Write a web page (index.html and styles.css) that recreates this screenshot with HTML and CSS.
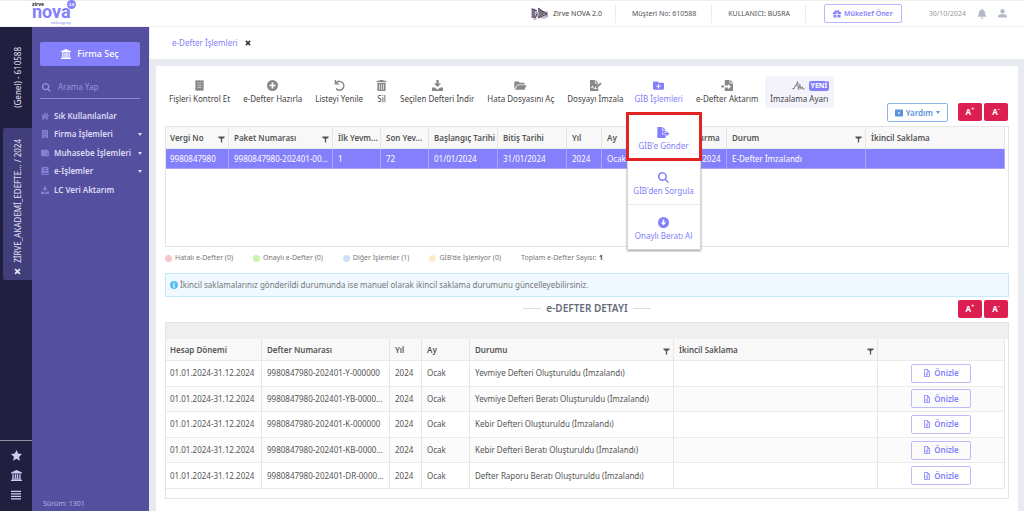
FILE: index.html
```html
<!DOCTYPE html>
<html lang="tr">
<head>
<meta charset="utf-8">
<title>Zirve NOVA 2.0 - e-Defter İşlemleri</title>
<link rel="stylesheet" href="styles.css">
</head>
<body>
<svg class="defs" aria-hidden="true">
  <symbol id="bank" viewBox="0 0 16 16"><path d="M8 0l8 3.500V5H0V3.500zM2 6h2v6H2zM5.500 6h2v6h-2zM8.500 6h2v6h-2zM12 6h2v6h-2zM1 12.500h14V14H1zM0 14.500h16V16H0z"/></symbol>
  <symbol id="search" viewBox="0 0 16 16"><path d="M6.500 0a6.500 6.500 0 0 1 5.200 10.300l4.100 4.100-1.600 1.600-4.100-4.200A6.500 6.500 0 1 1 6.500 0zm0 2.300a4.200 4.200 0 1 0 0 8.400 4.200 4.200 0 0 0 0-8.400z"/></symbol>
  <symbol id="home" viewBox="0 0 16 16"><path d="M8 1l8 7-1 1.200L8 3.200 1 9.200 0 8zM8 4.500l5.500 4.700V15h-4v-4h-3v4h-4V9.200zM12 2h2v4l-2-1.800z"/></symbol>
  <symbol id="building" viewBox="0 0 16 16"><path fill-rule="evenodd" d="M2 0h12v16h-4.500v-3h-3v3H2zM5 2.500V5h2V2.500zm4 0V5h2V2.500zM5 7v2.500h2V7zm4 0v2.500h2V7z"/></symbol>
  <symbol id="wallet" viewBox="0 0 16 16"><path fill-rule="evenodd" d="M2 1.500h12v2h1a1 1 0 0 1 1 1v9a1 1 0 0 1-1 1H2a2 2 0 0 1-2-2v-9a2 2 0 0 1 2-2zm10.500 6.500v2h2V8z"/></symbol>
  <symbol id="book" viewBox="0 0 16 16"><path fill-rule="evenodd" d="M3 0h12v16H3a2 2 0 0 1-2-2V2a2 2 0 0 1 2-2zm2 3v1.500h7V3zm0 3v1.500h7V6zm-1.500 6v2H13v-2z"/></symbol>
  <symbol id="download" viewBox="0 0 16 16"><path d="M6.300 0h3.400v5h3.500L8 10.200 2.800 5h3.500zM0 11h4.500L8 14l3.500-3H16v5H0z"/></symbol>
  <symbol id="star" viewBox="0 0 16 16"><path d="M8 0l2.400 5.200 5.600.7-4.200 3.900 1.100 5.700L8 12.700l-4.900 2.800 1.100-5.700L0 5.900l5.600-.7z"/></symbol>
  <symbol id="bars" viewBox="0 0 16 16"><path d="M0 1h16v2H0zM0 5h16v2H0zM0 9h16v2H0zM0 13h16v2H0z"/></symbol>
  <symbol id="receipt" viewBox="0 0 16 16"><path fill-rule="evenodd" d="M2 0l1.500 1L5 0l1.500 1L8 0l1.500 1L11 0l1.500 1L14 0v16l-1.500-1-1.500 1-1.500-1L8 16l-1.500-1L5 16l-1.500-1L2 16zM5 4v.8h6V4zm0 3.500v.8h6v-.8zM5 11v.8h6V11z"/></symbol>
  <symbol id="plus" viewBox="0 0 16 16"><path fill-rule="evenodd" d="M8 0a8 8 0 1 1 0 16A8 8 0 0 1 8 0zM6.800 3.700v3.100H3.700v2.400h3.100v3.100h2.400V9.200h3.100V6.800H9.200V3.700z"/></symbol>
  <symbol id="undo" viewBox="0 0 16 16"><path d="M1 0v6.500h6.500V4.600H4.300A5.200 5.200 0 1 1 4 11.800l-1.700 1.600A7.500 7.500 0 1 0 3 2.700V0z"/></symbol>
  <symbol id="trash" viewBox="0 0 16 16"><path fill-rule="evenodd" d="M5.500 0h5l.7 1H15v2H1V1h3.800zM2 4h12v11a1 1 0 0 1-1 1H3a1 1 0 0 1-1-1zm2.500 2v8h1V6zm3 0v8h1V6zm3 0v8h1V6z"/></symbol>
  <symbol id="folder" viewBox="0 0 18 16"><path d="M0 3a1 1 0 0 1 1-1h5l2 2h6a1 1 0 0 1 1 1v1.500H4.500L0 13zM5 7.500h13L14.500 14H1z"/></symbol>
  <symbol id="sign" viewBox="0 0 18 16"><path fill-rule="evenodd" d="M1 0h7v5h5v2L8 11v2h3l2-2v5H1zM2.500 11l1 1 1-2 1 2.500H8v-1H6.500L5 8z"/><path d="M9 0l4 4H9zM16 3.500l2 2L11.500 12H9.500v-2z"/></symbol>
  <symbol id="folderplus" viewBox="0 0 16 16"><path fill-rule="evenodd" d="M1.500 2h5l2 2h6A1.500 1.500 0 0 1 16 5.500v7a1.500 1.500 0 0 1-1.500 1.500h-13A1.500 1.500 0 0 1 0 12.500v-9A1.500 1.500 0 0 1 1.500 2zm5.700 4v2.200H5v1.600h2.200V12h1.600V9.800H11V8.200H8.800V6z"/></symbol>
  <symbol id="import" viewBox="0 0 18 16"><path fill-rule="evenodd" d="M5 0h7v5h5v11H5v-5h5v2.500L14 9.500 10 6v2H5z"/><path d="M13 0l4 4h-4zM0 8h4v3H0z"/></symbol>
  <symbol id="export" viewBox="0 0 18 16"><path fill-rule="evenodd" d="M0 0h7v5h5v3H7v3h5v5H0z"/><path d="M8 0l4 4H8zM8 8.800h5V6l4.800 3.800L13 13.500v-3H8z"/></symbol>
  <symbol id="wave" viewBox="0 0 18 16"><path d="M0 13l3-1 1.500-4h1.500L7.500 2l1.500 12 2-7 1.500 5.500 2-2 1 2.500H18" fill="none" stroke="currentColor" stroke-width="1.600"/></symbol>
  <symbol id="arrowdown" viewBox="0 0 16 16"><path fill-rule="evenodd" d="M8 0a8 8 0 1 1 0 16A8 8 0 0 1 8 0zM6.800 3.500V8H4l4 4.500L12 8H9.200V3.500z"/></symbol>
  <symbol id="film" viewBox="0 0 16 14"><path fill-rule="evenodd" d="M1.500 0h13A1.500 1.500 0 0 1 16 1.500v11a1.500 1.500 0 0 1-1.500 1.500h-13A1.500 1.500 0 0 1 0 12.500v-11A1.500 1.500 0 0 1 1.500 0zM6.500 4.500v5l4-2.500z"/></symbol>
  <symbol id="filter" viewBox="0 0 16 16"><path d="M1 1h14v3L9.500 7v8h-3V7L1 4z"/></symbol>
  <symbol id="gift" viewBox="0 0 16 16"><path fill-rule="evenodd" d="M1 4h2.500A2.500 2.500 0 0 1 8 1.800 2.500 2.500 0 0 1 12.500 4H15a1 1 0 0 1 1 1v3H9V4H7v4H0V5a1 1 0 0 1 1-1zM1 9.300h6V15H1zM9 9.300h6V15H9z"/></symbol>
  <symbol id="bell" viewBox="0 0 16 16"><path d="M8 0c1 0 1.500.6 1.500 1.400C12 2 13 4 13 6.500c0 3 1 4.500 2.500 6h-15C2 11 3 9.500 3 6.500 3 4 4 2 6.500 1.400 6.500.6 7 0 8 0zM5.800 13.500h4.400a2.200 2.200 0 0 1-4.400 0z"/></symbol>
  <symbol id="user" viewBox="0 0 16 16"><path d="M8 0a4 4 0 1 1 0 8 4 4 0 0 1 0-8zM0 15v-2c0-2.500 5-4 8-4s8 1.500 8 4v2z"/></symbol>
  <symbol id="info" viewBox="0 0 16 16"><path fill-rule="evenodd" d="M8 0a8 8 0 1 1 0 16A8 8 0 0 1 8 0zM6.800 3v2.400h2.400V3zM6 6.500v1.800h1v3H6V13h4v-1.700H9V6.500z"/></symbol>
  <symbol id="doc" viewBox="0 0 12 16"><path d="M1 1h6l4 4v10H1zM7 1v4h4M3.500 8h5M3.500 10h5M3.500 12h5" fill="none" stroke="currentColor" stroke-width="1.600"/></symbol>
  <symbol id="close" viewBox="0 0 10 10"><path d="M1.500 1.500l7 7M8.500 1.500l-7 7" fill="none" stroke="currentColor" stroke-width="2.600"/></symbol>
</svg>

<header class="topbar">
  <a class="logo" href="#" aria-label="Zirve nova 2.0 mikrogrup">
    <span class="logo-zirve">zirve</span>
    <span class="logo-nova">nova</span>
    <span class="logo-badge">2.0</span>
    <span class="logo-group">mikrogrup</span>
  </a>
  <div class="top-item product">
    <svg class="horn" viewBox="0 0 18 14"><path d="M0 1l5 1 1 3 10-1 1 6-4 2-7-2-1 3H3l-1-2H0z" fill="#c9b8dc"/><path d="M1 2h3v9H1zM7 1l8 5-8 5z" fill="#77727c"/><path d="M5 5h3v4H5zM13 5h4v5h-2z" fill="#aaa2b5"/><path d="M1 2l5 2M7 1l9 6-9 4M4 11l2-4" fill="none" stroke="#45404f"/></svg>
    Zirve NOVA 2.0
  </div>
  <div class="top-item">Müşteri No: 610588</div>
  <div class="top-item">KULLANICI: BUSRA</div>
  <button class="refer" type="button"><svg class="i8"><use href="#gift"/></svg>Mükellef Öner</button>
  <span class="date">30/10/2024</span>
  <button class="top-icon" type="button" aria-label="Bildirimler"><svg class="i10"><use href="#bell"/></svg></button>
  <button class="top-icon" type="button" aria-label="Kullanıcı"><svg class="i9"><use href="#user"/></svg></button>
</header>

<div class="shell">
  <nav class="rail" aria-label="Firmalar">
    <button class="rail-tab" type="button"><span class="vertical">(Genel) - 610588</span></button>
    <button class="rail-tab active" type="button"><span class="vertical">ZİRVE_AKADEMİ_EDEFTE... / 2024</span><svg class="i7"><use href="#close"/></svg></button>
    <div class="rail-tools">
      <button type="button" aria-label="Favoriler"><svg class="i12"><use href="#star"/></svg></button>
      <button type="button" aria-label="Firma"><svg class="i11"><use href="#bank"/></svg></button>
      <button type="button" aria-label="Menü"><svg class="i10"><use href="#bars"/></svg></button>
    </div>
  </nav>

  <aside class="sidebar">
    <button class="pick" type="button"><svg class="i10"><use href="#bank"/></svg>Firma Seç</button>
    <label class="search"><svg class="i9"><use href="#search"/></svg><input type="text" placeholder="Arama Yap" aria-label="Arama Yap"></label>
    <ul class="menu">
      <li><a href="#"><svg class="i8"><use href="#home"/></svg>Sık Kullanılanlar</a></li>
      <li><a href="#"><svg class="i8"><use href="#building"/></svg>Firma İşlemleri<i class="caret"></i></a></li>
      <li><a href="#"><svg class="i8"><use href="#wallet"/></svg>Muhasebe İşlemleri<i class="caret"></i></a></li>
      <li><a href="#"><svg class="i8"><use href="#book"/></svg>e-İşlemler<i class="caret"></i></a></li>
      <li><a href="#"><svg class="i8"><use href="#download"/></svg>LC Veri Aktarım</a></li>
    </ul>
    <p class="version">Sürüm: 1301</p>
  </aside>

  <main class="main">
    <div class="tabs"><a href="#">e-Defter İşlemleri</a><button type="button" aria-label="Sekmeyi kapat"><svg class="i6"><use href="#close"/></svg></button></div>
    <section class="card">
      <div class="card-head">
        <div class="toolbar">
          <button class="tool" type="button"><svg class="i11"><use href="#receipt"/></svg>Fişleri Kontrol Et</button>
          <button class="tool" type="button"><svg class="i11"><use href="#plus"/></svg>e-Defter Hazırla</button>
          <button class="tool" type="button"><svg class="i11"><use href="#undo"/></svg>Listeyi Yenile</button>
          <button class="tool" type="button"><svg class="i11"><use href="#trash"/></svg>Sil</button>
          <button class="tool" type="button"><svg class="i11"><use href="#download"/></svg>Seçilen Defteri İndir</button>
          <button class="tool" type="button"><svg class="i12"><use href="#folder"/></svg>Hata Dosyasını Aç</button>
          <button class="tool" type="button"><svg class="i12"><use href="#sign"/></svg>Dosyayı İmzala</button>
          <div class="tool-menu">
            <button class="tool open" type="button" aria-expanded="true"><svg class="i11"><use href="#folderplus"/></svg>GİB İşlemleri</button>
            <div class="dropdown">
              <button class="marked" type="button"><svg class="i12"><use href="#export"/></svg>GİB'e Gönder</button>
              <button type="button"><svg class="i11"><use href="#search"/></svg>GİB'den Sorgula</button>
              <button type="button"><svg class="i11"><use href="#arrowdown"/></svg>Onaylı Beratı Al</button>
            </div>
          </div>
          <button class="tool" type="button"><svg class="i12"><use href="#import"/></svg>e-Defter Aktarım</button>
          <button class="tool tinted" type="button"><span class="tool-top"><svg class="i12"><use href="#wave"/></svg><b class="new">YENİ</b></span>İmzalama Ayarı</button>
        </div>
        <div class="actions">
          <button class="help" type="button"><svg class="i8"><use href="#film"/></svg>Yardım<i class="caret"></i></button>
          <button class="zoom" type="button">A<sup>+</sup></button>
          <button class="zoom" type="button">A<sup>-</sup></button>
        </div>
      </div>

      <div class="grid list">
        <table>
          <colgroup><col class="w63"><col class="w104"><col class="w48"><col class="w48"><col class="w69"><col class="w69"><col class="w35"><col class="w71"><col class="w54"><col class="w139"><col></colgroup>
          <thead><tr><th>Vergi No<svg class="flt"><use href="#filter"/></svg></th><th>Paket Numarası<svg class="flt"><use href="#filter"/></svg></th><th>İlk Yevm...</th><th>Son Yev...</th><th>Başlangıç Tarihi</th><th>Bitiş Tarihi</th><th>Yıl</th><th>Ay</th><th>Oluşturma</th><th>Durum<svg class="flt"><use href="#filter"/></svg></th><th>İkincil Saklama</th></tr></thead>
          <tbody><tr class="selected"><td>9980847980</td><td>9980847980-202401-00...</td><td>1</td><td>72</td><td>01/01/2024</td><td>31/01/2024</td><td>2024</td><td>Ocak</td><td>01/02/2024</td><td>E-Defter İmzalandı</td><td></td></tr></tbody>
        </table>
      </div>

      <ul class="legend">
        <li><i class="dot pink"></i>Hatalı e-Defter (0)</li>
        <li><i class="dot green"></i>Onaylı e-Defter (0)</li>
        <li><i class="dot blue"></i>Diğer İşlemler (1)</li>
        <li><i class="dot yellow"></i>GİB'de İşleniyor (0)</li>
        <li>Toplam e-Defter Sayısı: <b>1</b></li>
      </ul>

      <p class="notice"><svg class="i8"><use href="#info"/></svg>İkincil saklamalarınız gönderildi durumunda ise manuel olarak ikincil saklama durumunu güncelleyebilirsiniz.</p>

      <div class="detail-head">
        <h2>e-DEFTER DETAYI</h2>
        <div class="actions">
          <button class="zoom" type="button">A<sup>+</sup></button>
          <button class="zoom" type="button">A<sup>-</sup></button>
        </div>
      </div>

      <div class="grid detail">
        <div class="band"></div>
        <table>
          <colgroup><col class="w96"><col class="w128"><col class="w32"><col class="w48"><col class="w204"><col class="w204"><col></colgroup>
          <thead><tr><th>Hesap Dönemi</th><th>Defter Numarası</th><th>Yıl</th><th>Ay</th><th>Durumu<svg class="flt"><use href="#filter"/></svg></th><th>İkincil Saklama<svg class="flt"><use href="#filter"/></svg></th><th></th></tr></thead>
          <tbody>
            <tr><td>01.01.2024-31.12.2024</td><td>9980847980-202401-Y-000000</td><td>2024</td><td>Ocak</td><td>Yevmiye Defteri Oluşturuldu (İmzalandı)</td><td></td><td class="act"><button class="preview" type="button"><svg class="i8"><use href="#doc"/></svg>Önizle</button></td></tr>
            <tr><td>01.01.2024-31.12.2024</td><td>9980847980-202401-YB-0000...</td><td>2024</td><td>Ocak</td><td>Yevmiye Defteri Beratı Oluşturuldu (İmzalandı)</td><td></td><td class="act"><button class="preview" type="button"><svg class="i8"><use href="#doc"/></svg>Önizle</button></td></tr>
            <tr><td>01.01.2024-31.12.2024</td><td>9980847980-202401-K-000000</td><td>2024</td><td>Ocak</td><td>Kebir Defteri Oluşturuldu (İmzalandı)</td><td></td><td class="act"><button class="preview" type="button"><svg class="i8"><use href="#doc"/></svg>Önizle</button></td></tr>
            <tr><td>01.01.2024-31.12.2024</td><td>9980847980-202401-KB-0000...</td><td>2024</td><td>Ocak</td><td>Kebir Defteri Beratı Oluşturuldu (İmzalandı)</td><td></td><td class="act"><button class="preview" type="button"><svg class="i8"><use href="#doc"/></svg>Önizle</button></td></tr>
            <tr><td>01.01.2024-31.12.2024</td><td>9980847980-202401-DR-0000...</td><td>2024</td><td>Ocak</td><td>Defter Raporu Beratı Oluşturuldu (İmzalandı)</td><td></td><td class="act"><button class="preview" type="button"><svg class="i8"><use href="#doc"/></svg>Önizle</button></td></tr>
          </tbody>
        </table>
      </div>
    </section>
  </main>
</div>
</body>
</html>
```
FILE: styles.css
```css
* { box-sizing: border-box; }
body {
  margin: 0;
  min-height: 100vh;
  display: flex;
  flex-direction: column;
  background: #e7eaf1;
  color: #555;
  font: 8px/12px "Noto Sans", sans-serif;
}
button, input { font: inherit; color: inherit; border: 0; background: none; padding: 0; margin: 0; }
a { color: inherit; text-decoration: none; }
ul { list-style: none; margin: 0; padding: 0; }
p, h2 { margin: 0; }
svg { flex: none; fill: currentColor; }
.defs { display: none; }
.i6 { width: 6px; height: 6px; }
.i7 { width: 7px; height: 7px; }
.i8 { width: 8px; height: 8px; }
.i9 { width: 9px; height: 9px; }
.i10 { width: 10px; height: 10px; }
.i11 { width: 11px; height: 11px; }
.i12 { width: 13px; height: 11px; }
.caret { border: 2px solid transparent; border-top: 3px solid currentColor; border-bottom: 0; }

/* Top bar */
.topbar {
  height: 27px;
  padding-right: 17px;
  display: flex;
  align-items: center;
  background: #fff;
  border-top: 1px solid #efefef;
  border-bottom: 1px solid #f0f0f2;
  font-size: 7px;
}
.logo { position: relative; width: 48px; height: 25px; margin: 0 auto 0 32px; color: #8480fb; }
.logo span { position: absolute; }
.logo-zirve { left: 0; top: 0; font: bold 5px/6px "Noto Sans", sans-serif; color: #222; }
.logo-nova { left: 0; top: 5px; font: bold 18px/12px Roboto, sans-serif; }
.logo-badge { left: 35px; top: -1px; width: 9px; height: 9px; border-radius: 50%; background: #8480fb; color: #fff; font: bold 4px/9px "Noto Sans", sans-serif; text-align: center; }
.logo-group { left: 19px; top: 19px; font: 4px/5px "Noto Sans", sans-serif; }
.top-item { height: 18px; margin-right: 16px; padding-right: 15px; display: flex; align-items: center; gap: 4px; border-right: 1px solid #ececec; }
.product { padding-right: 13px; color: #444; }
.horn { width: 18px; height: 14px; }
.refer { height: 19px; margin: 0 27px 0 2px; padding: 0 8px; display: flex; align-items: center; gap: 3px; border: 1px solid #b9b6fd; border-radius: 2px; color: #8480fb; font-weight: 600; }
.date { color: #999; }
.top-icon { display: flex; margin-left: 11px; color: #b0bac9; }

.shell { flex: 1; display: flex; }

/* Company rail */
.rail { width: 32px; flex: none; display: flex; flex-direction: column; background: #211f40; color: #e4e3f5; }
.rail-tab { height: 101px; margin-left: 3px; display: flex; flex-direction: column; align-items: center; justify-content: center; gap: 5px; }
.rail-tab.active { height: 152px; padding-top: 6px; background: #423e7c; border-radius: 2px 0 0 2px; }
.vertical { writing-mode: vertical-rl; transform: rotate(180deg); white-space: nowrap; }
.rail-tools { margin-top: auto; padding: 9px 0 11px; display: flex; flex-direction: column; align-items: center; gap: 9px; border-top: 1px solid #8f8ea0; color: #c9cdf5; }
.rail-tools button { display: flex; }

/* Sidebar */
.sidebar { width: 117px; flex: none; padding: 15px 9px 1px 8px; display: flex; flex-direction: column; background: #554fa0; color: #dddcf4; font-size: 9px; }
.pick { height: 24px; display: flex; align-items: center; justify-content: center; gap: 6px; background: #8480fb; border-radius: 2px; color: #fff; font-weight: 500; }
.search { height: 23px; margin: 10px 0 8px; padding: 0 2px; display: flex; align-items: center; gap: 7px; border-bottom: 1px solid #8d88cf; color: #9a96dc; }
.search input { flex: 1; min-width: 0; outline: 0; font-size: 8px; }
.search input::placeholder { color: #9a96dc; opacity: 1; }
.menu a { height: 18px; padding-left: 1px; display: flex; align-items: center; gap: 5px; font-size: 8px; font-weight: 600; white-space: nowrap; }
.menu li:nth-child(even) { padding-bottom: 1px; }
.menu svg { color: #8480d6; }
.menu .caret { margin-left: auto; margin-right: -2px; }
.version { margin-top: auto; padding-left: 3px; font-size: 7px; color: #b6b3e2; }

/* Page */
.main { flex: 1; min-width: 0; margin-left: 1px; display: flex; flex-direction: column; }
.tabs { height: 32px; padding-left: 22px; display: flex; align-items: center; gap: 7px; background: #fff; color: #8480fb; }
.tabs button { display: flex; color: #333; }
.card { flex: 1; margin: 7px 6px 0; padding: 10px 9px 12px; background: #fff; display: flex; flex-direction: column; }
.card-head { display: flex; align-items: flex-end; justify-content: space-between; margin-bottom: 4px; }
.toolbar { display: flex; gap: 13px; padding: 0 0 14px 4px; }
.tool { height: 32px; display: flex; flex-direction: column; align-items: center; gap: 2px; padding-top: 4px; color: #444; white-space: nowrap; }
.tool svg { color: #888; }
.tool.open, .tool.open svg { color: #8480fb; }
.tool.tinted { padding: 4px 5px 0; margin-left: -7px; background: #f4f3fc; border-radius: 2px; }
.tool-top { height: 11px; display: flex; align-items: center; gap: 4px; padding-left: 22px; }
.new { padding: 0 2px; background: #8480fb; border-radius: 2px; color: #fff; font-size: 7px; line-height: 10px; }
.tool-menu { position: relative; margin-left: -2px; }
.dropdown { position: absolute; z-index: 2; left: -8px; top: 37px; width: 74px; background: #fff; border: 1px solid #d5d5d5; box-shadow: 0 1px 2px #999; }
.dropdown button { width: 100%; height: 45px; padding-top: 5px; display: flex; flex-direction: column; align-items: center; justify-content: center; gap: 2px; border-top: 1px solid #e9e9e9; color: #8480fb; white-space: nowrap; }
.dropdown .marked { border-top: 0; outline: 3px solid #e02424; outline-offset: -1px; }
.actions { display: flex; gap: 2px; padding-right: 1px; }
.help { height: 19px; margin-right: 8px; padding: 0 7px; display: flex; align-items: center; gap: 3px; border: 1px solid #8ab4ea; border-radius: 2px; color: #5a92dc; font-weight: 600; }
.zoom { width: 24px; height: 18px; background: #dc1f50; border-radius: 2px; color: #fff; font-weight: 700; }
.zoom sup { font-size: 6px; line-height: 0; }

/* Data grids */
.grid { border: 1px solid #e4e4e4; padding-right: 3px; overflow: hidden; }
.list { height: 121px; }
.detail { height: 177px; }
.band { height: 16px; margin-right: -3px; background: #efefef; }
table { width: 100%; border-collapse: separate; border-spacing: 0; table-layout: fixed; }
.detail table { height: 150px; }
th, td { position: relative; padding: 0 4px; border-right: 1px solid #e6e6e6; border-bottom: 1px solid #ebebeb; text-align: left; white-space: nowrap; overflow: hidden; }
th { height: 22px; background: #f8f8f8; color: #555; font-weight: 600; }
.list th, .list td { padding: 0 5px; }
.list th:first-child, .list td:first-child { padding-left: 4px; }
.detail th, .detail td { padding-left: 5px; }
.detail th:first-child, .detail td:first-child { padding-left: 4px; }
.selected td { height: 20px; background: #8480fb; color: #fff; border-color: #aaa7fd; }
.detail tbody tr:nth-child(even) { background: #fbfbfb; }
.flt { position: absolute; right: 3px; top: 9px; width: 7px; height: 7px; color: #555; }
.detail .act { padding: 0 4px; text-align: center; }
.preview { height: 19px; padding: 0 11px; display: inline-flex; align-items: center; gap: 3px; border: 1px solid #bebbfb; border-radius: 2px; color: #8480fb; font-weight: 600; vertical-align: middle; }
.w32 { width: 32px; }
.w35 { width: 35px; }
.w48 { width: 48px; }
.w54 { width: 54px; }
.w63 { width: 63px; }
.w69 { width: 69px; }
.w71 { width: 71px; }
.w96 { width: 96px; }
.w104 { width: 104px; }
.w128 { width: 128px; }
.w139 { width: 139px; }
.w204 { width: 204px; }

.legend { display: flex; gap: 20px; padding: 5px 0 9px; color: #777; font-size: 7px; }
.legend li { display: flex; align-items: center; gap: 3px; }
.legend b { color: #444; }
.dot { width: 7px; height: 7px; border-radius: 50%; }
.pink { background: #fac5d0; }
.green { background: #c6f3b0; }
.blue { background: #cbe0f8; }
.yellow { background: #fdecc8; }
.notice { height: 24px; padding: 0 4px; display: flex; align-items: center; gap: 2px; background: #eff9ff; border: 1px solid #c5e8fb; color: #777; }
.notice svg { color: #58bdf5; }
.detail-head { height: 25px; padding-top: 3px; display: grid; grid-template-columns: 1fr auto 1fr; }
.detail-head h2 { grid-column: 2; display: flex; align-items: center; gap: 5px; height: 16px; font-size: 10px; font-weight: 600; color: #666b78; }
.detail-head h2::before, .detail-head h2::after { content: ""; width: 18px; border-top: 1px solid #ddd; }
.detail-head .actions { justify-self: end; }
```
